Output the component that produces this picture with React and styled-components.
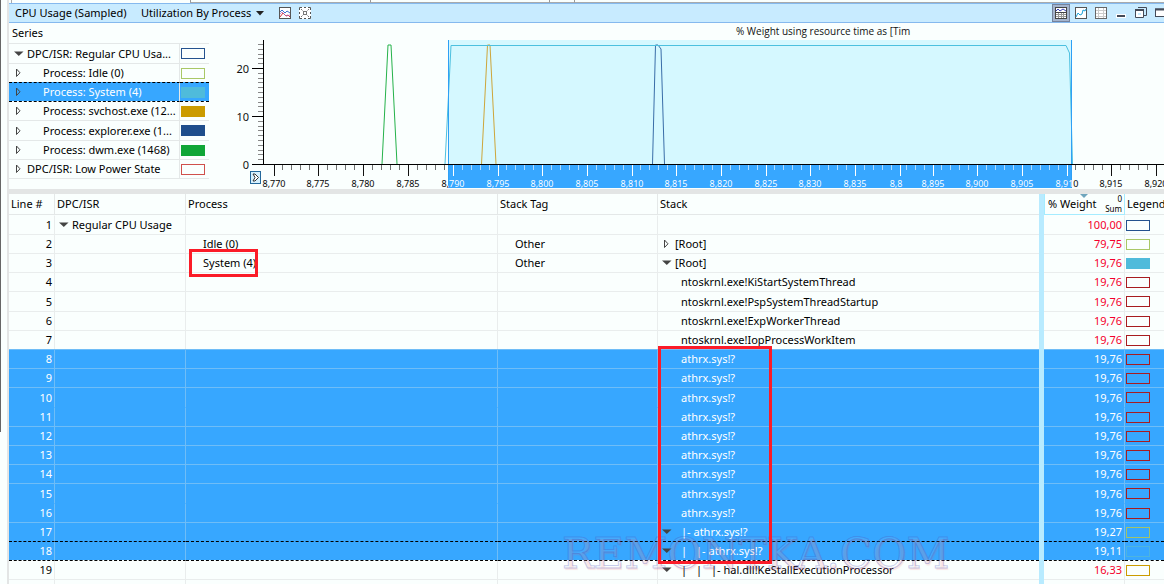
import React, { useState } from "react";
import styled, { createGlobalStyle } from "styled-components";

const seriesRows = [
  { label: "DPC/ISR: Regular CPU Usa...", open: true, line: "#24528f" },
  { label: "Process: Idle (0)", child: true, line: "#a9c866" },
  { label: "Process: System (4)", child: true, line: "#4fbbdb", fill: "#4fbbdb", focused: true },
  { label: "Process: svchost.exe (12...", child: true, line: "#cb9b00", fill: "#cb9b00" },
  { label: "Process: explorer.exe (1...", child: true, line: "#1f4e8c", fill: "#1f4e8c" },
  { label: "Process: dwm.exe (1468)", child: true, line: "#10a637", fill: "#10a637" },
  { label: "DPC/ISR: Low Power State", line: "#d0504c" },
];

const athrx = { stack: "athrx.sys!?", weight: "19,76", line: "#a81c20", selected: true };

const tableRows = [
  { isr: "Regular CPU Usage", weight: "100,00", line: "#24528f" },
  { process: "Idle (0)", tag: "Other", root: "closed", weight: "79,75", line: "#a9c866" },
  { process: "System (4)", tag: "Other", root: "open", weight: "19,76", line: "#4fbbdb", fill: "#4fbbdb" },
  { stack: "ntoskrnl.exe!KiStartSystemThread", weight: "19,76", line: "#a81c20" },
  { stack: "ntoskrnl.exe!PspSystemThreadStartup", weight: "19,76", line: "#a81c20" },
  { stack: "ntoskrnl.exe!ExpWorkerThread", weight: "19,76", line: "#a81c20" },
  { stack: "ntoskrnl.exe!IopProcessWorkItem", weight: "19,76", line: "#a81c20" },
  athrx,
  athrx,
  athrx,
  athrx,
  athrx,
  athrx,
  athrx,
  athrx,
  athrx,
  { stack: "|- athrx.sys!?", open: true, weight: "19,27", line: "#a3c46a", selected: true },
  { stack: "|- athrx.sys!?", open: true, depth: 1, weight: "19,11", line: "#4db4e0", selected: true, focused: true },
  { stack: "|- hal.dll!KeStallExecutionProcessor", open: true, depth: 2, weight: "16,33", line: "#cb9b00", afterFocus: true },
];

const App = () => {
  return (
    <Page>
      <GlobalStyle />
      <Gutter />
      <Window>
        <TabStrip>
          <ActiveTab />
          <TabEdge $width={180} />
          <TabEdge $width={179} />
          <TabEdge $width={25} />
          <TabEdge />
        </TabStrip>
        <Toolbar />
        <TopPane>
          <SeriesList />
          <Chart />
        </TopPane>
        <Splitter />
        <DataTable />
      </Window>
    </Page>
  );
};

export default App;

const Toolbar = () => (
  <Bar>
    <Title>CPU Usage (Sampled)</Title>
    <Preset>
      <PresetSelect aria-label="Preset" defaultValue="process">
        <option value="process">Utilization By Process</option>
      </PresetSelect>
      <svg width="8" height="5">
        <path d="M0 0h8L4 4.5z" fill="#222" />
      </svg>
    </Preset>
    <IconButton aria-label="Chart colors">
      <svg width="12" height="12" fill="none">
        <rect x=".5" y=".5" width="11" height="11" fill="#fff" stroke="#555" />
        <path d="M1 5l2-2 3 3 2-2 3 2" stroke="#3f6fd0" />
        <path d="M1 10l3-4 3 3 2-1 2 2" stroke="#d8323c" />
        <path d="M1 7l2-2 4 4 4-1" stroke="#b060b0" strokeWidth=".7" />
      </svg>
    </IconButton>
    <IconButton aria-label="Fit selection">
      <svg width="12" height="12" fill="none">
        <rect width="12" height="12" fill="#fff" />
        <path
          d="M.5 3V.5H3M5 .5h2M9 .5h2.500V3M11.500 5v2M11.500 9v2.500H9M7 11.500H5M3 11.500H.5V9M.5 7V5"
          stroke="#555"
        />
        <path d="M2 2l1.500 1.500M10 2L8.500 3.500M2 10l1.500-1.500M10 10L8.500 8.500" stroke="#777" />
        <rect x="4.500" y="4.500" width="3" height="3" stroke="#777" />
      </svg>
    </IconButton>
    <WindowButtons>
      <IconButton aria-label="Graph and table" $pressed>
        <svg width="12" height="12" fill="none">
          <rect x=".5" y=".5" width="11" height="11" fill="#fff" stroke="#444" />
          <path d="M1 4l2-2 2 2 3-2 3 2" stroke="#3a43b8" />
          <path d="M1 5.500h10" stroke="#444" />
          <path d="M1 7.500h10M1 9.500h10M3.500 6v5M6.500 6v5M8.500 6v5" stroke="#999" />
        </svg>
      </IconButton>
      <IconButton aria-label="Graph only">
        <svg width="12" height="12" fill="none">
          <rect x=".5" y=".5" width="11" height="11" fill="#fff" stroke="#555" />
          <path d="M1 10l2-4 2 2 2-1 1-4 2 1 1-2" stroke="#1ba1d8" />
        </svg>
      </IconButton>
      <IconButton aria-label="Table only">
        <svg width="12" height="12" fill="none">
          <rect x=".5" y=".5" width="11" height="11" fill="#fff" stroke="#666" />
          <path d="M1 3.500h10M1 6.500h10M1 9.500h10M3.500 1v10M8.500 1v10" stroke="#ccc" />
        </svg>
      </IconButton>
      <IconButton aria-label="Minimize">
        <svg width="12" height="12">
          <path d="M1 7h10v4H1z" fill="#fff" />
          <path d="M2 8h8v2H2z" fill="#444b58" />
        </svg>
      </IconButton>
      <IconButton aria-label="Restore">
        <svg width="12" height="12" fill="none">
          <path d="M3 .5h8.500V8.500H9" stroke="#444b58" />
          <path d="M.5 2.500h8v8h-8z" fill="#fff" stroke="#444b58" />
          <path d="M0 3h9" stroke="#444b58" strokeWidth="2" />
          <path d="M3 6h3v2H3z" fill="#c8ebff" />
        </svg>
      </IconButton>
      <IconButton aria-label="Maximize">
        <svg width="12" height="12" fill="none">
          <rect x=".5" y="2" width="11" height="7.500" fill="#fff" stroke="#444b58" />
          <path d="M0 2.500h12" stroke="#444b58" strokeWidth="2" />
        </svg>
      </IconButton>
    </WindowButtons>
  </Bar>
);

const Twisty = ({ open: initial }) => {
  const [open, setOpen] = useState(!!initial);

  return (
    <TwistyButton aria-label="Expand" aria-expanded={open} onClick={() => setOpen(!open)}>
      <svg width="10" height="10">
        {open ? (
          <path d="M0 2.500h9.500L4.800 7z" fill="#444" />
        ) : (
          <path d="M2.500 1v7.500L6 4.800z" fill="none" stroke="#444" />
        )}
      </svg>
    </TwistyButton>
  );
};

const SeriesList = () => (
  <SeriesTable>
    <colgroup>
      <col />
      <col width="29" />
    </colgroup>
    <thead>
      <tr>
        <th>Series</th>
        <th aria-label="Legend" />
      </tr>
    </thead>
    <tbody>
      {seriesRows.map((row, i) => (
        <SeriesRow key={row.label} $focused={row.focused} $afterFocus={i > 0 && seriesRows[i - 1].focused}>
          <td>
            <Cell>
              <Twisty open={row.open} />
              <Label $indent={row.child ? 16 : 0}>{row.label}</Label>
            </Cell>
          </td>
          <td>
            <Swatch $line={row.line} $fill={row.fill} />
          </td>
        </SeriesRow>
      ))}
    </tbody>
  </SeriesTable>
);

const axisTop = 17;
const axisBottom = 141;
const axisLeft = 54;
const selectionStart = 239;
const selectionEnd = 863;

const majorTicks = [
  [65, "8,770"],
  [109, "8,775"],
  [154, "8,780"],
  [199, "8,785"],
  [244, "8,790"],
  [289, "8,795"],
  [333, "8,800"],
  [378, "8,805"],
  [423, "8,810"],
  [467, "8,815"],
  [512, "8,820"],
  [557, "8,825"],
  [601, "8,830"],
  [646, "8,835"],
  [691, "8,8"],
  [724, "8,895"],
  [768, "8,900"],
  [813, "8,905"],
  [858, "8,910"],
  [902, "8,915"],
  [947, "8,920"],
];

const minorTicks = majorTicks.flatMap(([x], i) => {
  const next = majorTicks[i + 1];
  if (!next) return [];
  const gap = next[0] - x;
  return [9, 18, 27, 36].filter((step) => step < gap - 4).map((step) => next[0] - step);
});

const Chart = () => (
  <ChartArea>
    <svg width="100%" height="166" fill="none">
      <defs>
        <linearGradient id="ink" gradientUnits="userSpaceOnUse" x1={selectionStart} x2={selectionEnd} y1="0" y2="0">
          <stop offset="0" stopColor="#111" />
          <stop offset="0" stopColor="#fff" />
          <stop offset="1" stopColor="#fff" />
          <stop offset="1" stopColor="#111" />
        </linearGradient>
      </defs>

      <rect x={selectionStart} y={axisTop} width={selectionEnd - selectionStart} height="124" fill="#d5f8ff" />
      <rect x={selectionStart} y={axisBottom} width={selectionEnd - selectionStart} height="24" fill="#37a7ff" />

      <path d="M173 141L179 22H182L188 141" stroke="#25b24a" />
      <path d="M272.500 141L278.500 22H281L287 141" stroke="#cda63a" />
      <path d="M443.500 141L446.500 22H449L452 26L455.500 141" stroke="#3a6da8" />
      <path d="M236 141L242 22.500H857L860.500 30L863.500 141" stroke="#4cc0df" />
      <path d={`M${selectionStart + 0.5} ${axisTop}V165M${selectionEnd - 0.5} ${axisTop}V165`} stroke="#2ea0f5" />

      <path d={`M${axisLeft + 0.5} ${axisTop}V${axisBottom}M43 ${axisBottom + 0.5}H2000`} stroke="#000" />
      {Array.from({ length: 26 }, (_, i) => {
        const y = Math.round(axisBottom - i * 4.8) + 0.5;
        return <path key={i} d={`M${i % 10 === 0 ? 43 : 49} ${y}H54`} stroke={i % 10 === 0 ? "#000" : "#888"} />;
      })}
      {[0, 10, 20].map((value) => (
        <AxisText key={value} x="40" y={axisBottom - value * 4.8 + 5} textAnchor="end" $size={11}>
          {value}
        </AxisText>
      ))}

      {minorTicks.map((x) => (
        <rect key={x} x={x} y="142" width="1" height="5" fill="url(#ink)" opacity=".6" />
      ))}
      {majorTicks.map(([x, label]) => (
        <g key={label} fill="url(#ink)">
          <rect x={x} y="142" width="1" height="11" />
          <AxisText x={label === "8,8" ? x - 4 : x} y="164" textAnchor="middle" $size={9}>
            {label}
          </AxisText>
        </g>
      ))}

      <ChartTitle x="527" y="12">
        % Weight using resource time as [Tim
      </ChartTitle>

      <rect x="41.500" y="148.500" width="10" height="12" fill="#d6f1ff" stroke="#24689b" />
      <path d="M44 151h2l3.500 3.500L46 158h-2l2-3.500z" fill="#fff" stroke="#333" />
    </svg>
  </ChartArea>
);

const DataTable = () => (
  <TableArea>
    <table>
      <colgroup>
        <col width="46" />
        <col width="131" />
        <col width="312" />
        <col width="160" />
        <col />
        <col width="5" />
        <col width="81" />
        <col width="39" />
      </colgroup>
      <thead>
        <tr>
          <HeadCell>Line #</HeadCell>
          <HeadCell>DPC/ISR</HeadCell>
          <HeadCell>Process</HeadCell>
          <HeadCell>Stack Tag</HeadCell>
          <HeadCell $last>Stack</HeadCell>
          <Divider as="th" aria-label="Divider" />
          <HeadCell $sorted>
            <SortArrow width="8" height="4">
              <path d="M0 0h8L4 4z" fill="#6fa5bd" />
            </SortArrow>
            <SortedHead>
              % Weight
              <Aggregate>
                <span>0</span>
                <span>Sum</span>
              </Aggregate>
            </SortedHead>
          </HeadCell>
          <HeadCell $last>Legend</HeadCell>
        </tr>
      </thead>
      <tbody>
        {tableRows.map((row, i) => (
          <Row key={i} $selected={row.selected} $dashed={row.focused || row.afterFocus}>
            <NumberCell>{i + 1}</NumberCell>
            <BodyCell>
              {row.isr && (
                <Cell>
                  <Twisty open />
                  <Label>{row.isr}</Label>
                </Cell>
              )}
            </BodyCell>
            <BodyCell>
              <Leaf>{row.process}</Leaf>
            </BodyCell>
            <BodyCell>
              <Leaf>{row.tag}</Leaf>
            </BodyCell>
            <BodyCell $last>
              <Cell>
                {row.root || row.open ? <Twisty open={row.root !== "closed"} /> : <Blank />}
                {row.root ? (
                  <Label>[Root]</Label>
                ) : (
                  <Label $indent={6}>
                    {Array.from({ length: row.depth || 0 }, (_, n) => (
                      <Guide key={n}>|</Guide>
                    ))}
                    {row.stack}
                  </Label>
                )}
              </Cell>
            </BodyCell>
            <Divider />
            <WeightCell $selected={row.selected}>{row.weight}</WeightCell>
            <BodyCell $last>
              <Swatch $line={row.line} $fill={row.fill} />
            </BodyCell>
          </Row>
        ))}
        <Row>
          <NumberCell />
          <BodyCell />
          <BodyCell />
          <BodyCell />
          <BodyCell $last />
          <Divider />
          <WeightCell />
          <BodyCell $last />
        </Row>
      </tbody>
    </table>
    <Watermark>REMONTKA.COM</Watermark>
    <Marker $left={180} $top={55} $width={69} $height={28} />
    <Marker $left={649} $top={152} $width={114} $height={218} />
  </TableArea>
);

const GlobalStyle = createGlobalStyle`
  * {
    box-sizing: border-box;
  }

  body {
    margin: 0;
    overflow: hidden;
    background: #fafffe;
    color: #000;
    font-family: "Noto Sans", "Open Sans", sans-serif;
    font-size: 11px;
    line-height: 18px;
  }

  table {
    width: 100%;
    border-spacing: 0;
    table-layout: fixed;
  }

  th {
    font-weight: normal;
    text-align: left;
  }

  th, td {
    padding: 0;
    overflow: hidden;
    white-space: nowrap;
  }

  button, select {
    padding: 0;
    border: 0;
    background: none;
    color: inherit;
    font: inherit;
  }
`;

const Page = styled.div`
  display: flex;
  height: 100vh;
  overflow: hidden;
`;

const Gutter = styled.div`
  flex: none;
  width: 9px;
  height: 100%;
  border-right: 2px solid #e3e5e5;
  background: linear-gradient(#666, #666) 0 0 / 1px 74% no-repeat;
`;

const Window = styled.main`
  display: flex;
  flex: 1;
  flex-direction: column;
  min-width: 0;
`;

const TabStrip = styled.div`
  display: flex;
  flex: none;
  height: 3px;
`;

const ActiveTab = styled.div`
  width: 179px;
  margin-left: 2px;
  border-left: 1px solid #aaa;
`;

const TabEdge = styled.div`
  flex: ${(props) => (props.$width ? "none" : "1")};
  width: ${(props) => props.$width}px;
  border-left: 1px solid #999;
  border-bottom: 1px solid #a8aaac;
`;

const Bar = styled.header`
  display: flex;
  flex: none;
  align-items: center;
  height: 20px;
  padding-left: 6px;
  border-top: 1px solid #85b9ee;
  border-bottom: 1px solid #85b9ee;
  background: #c8ebff;
  overflow: hidden;
`;

const Title = styled.span`
  width: 126px;
  white-space: nowrap;
`;

const Preset = styled.div`
  display: flex;
  align-items: center;
  gap: 4px;
  width: 135px;
`;

const PresetSelect = styled.select`
  appearance: none;
  height: 18px;
  outline: none;
`;

const IconButton = styled.button`
  display: flex;
  flex: none;
  align-items: center;
  justify-content: center;
  width: 18px;
  height: 18px;
  margin-right: 2px;
  background: ${(props) => (props.$pressed ? "#a5b5ce" : "none")};
  border: ${(props) => (props.$pressed ? "1px solid #75839c" : "0")};
`;

const WindowButtons = styled.div`
  display: flex;
  width: 112px;
  margin-left: auto;
  overflow: hidden;
`;

const TopPane = styled.section`
  display: flex;
  flex: none;
  align-items: flex-start;
`;

const SeriesTable = styled.table`
  && {
    flex: none;
    width: 200px;
    border-bottom: 1px solid #e4e8e8;
  }

  th {
    height: 20px;
    padding-left: 3px;
  }
`;

const dashed = "1px dashed #000";

const SeriesRow = styled.tr`
  height: 19px;
  background: ${(props) => (props.$focused ? "#37a7ff" : "none")};
  color: ${(props) => (props.$focused ? "#fff" : "inherit")};

  &:nth-child(4n + 1) {
    height: 20px;
  }

  td {
    border-top: ${(props) => (props.$focused || props.$afterFocus ? dashed : "1px solid #e4e8e8")};
  }

  td:first-child {
    padding-left: 1px;
    border-right: 1px solid #e4e8e8;
  }

  td:last-child {
    padding-left: 1px;
  }
`;

const Cell = styled.div`
  display: flex;
  align-items: center;
  height: 18px;
  padding-left: 3px;
`;

const TwistyButton = styled.button`
  display: flex;
  flex: none;
  align-items: center;
  justify-content: center;
  width: 12px;
  height: 12px;
  margin-right: 2px;
`;

const Blank = styled.span`
  flex: none;
  width: 14px;
`;

const Label = styled.span`
  padding-left: ${(props) => props.$indent || 0}px;
`;

const Leaf = styled.span`
  padding-left: 17px;
`;

const Guide = styled.span`
  display: inline-block;
  width: 15px;
`;

const Swatch = styled.div`
  width: 24px;
  height: 11px;
  border: 1px solid ${(props) => props.$line};
  background: ${(props) => props.$fill || "transparent"};
`;

const ChartArea = styled.div`
  flex: 1;
  min-width: 0;
  height: 166px;
  overflow: hidden;
`;

const AxisText = styled.text`
  fill: ${(props) => (props.$size === 9 ? "inherit" : "#111")};
  font-size: ${(props) => props.$size}px;
`;

const ChartTitle = styled.text`
  fill: #111;
  font-family: "Open Sans", "Noto Sans", sans-serif;
  font-size: 10px;
`;

const Splitter = styled.div`
  flex: none;
  height: 5px;
  background: #e3e5e5;
`;

const TableArea = styled.section`
  position: relative;
  flex: 1;
  min-height: 0;
  overflow: hidden;
`;

const HeadCell = styled.th`
  position: ${(props) => (props.$sorted ? "relative" : "static")};
  height: 21px;
  padding-left: ${(props) => (props.$sorted ? 3 : 2)}px;
  border: 0 solid ${(props) => (props.$sorted ? "#a5ecff" : "#e4e8e8")};
  border-width: 0 ${(props) => (props.$last ? 0 : 1)}px 1px ${(props) => (props.$sorted ? 1 : 0)}px;
`;

const SortedHead = styled.div`
  display: flex;
  justify-content: space-between;
  height: 20px;
  padding-right: 2px;
  line-height: 20px;
`;

const SortArrow = styled.svg`
  position: absolute;
  top: 0;
  left: 35px;
`;

const Aggregate = styled.span`
  display: flex;
  flex-direction: column;
  align-items: flex-end;
  font-size: 8px;
  line-height: 10px;
`;

const Row = styled.tr`
  height: 19px;
  background: ${(props) => (props.$selected ? "#37a7ff" : "none")};
  color: ${(props) => (props.$selected ? "#fff" : "inherit")};

  &:nth-child(5n) {
    height: 20px;
  }

  td {
    border: 0 solid ${(props) => (props.$selected ? "#6fbdf7" : "#e9eded")};
    border-top: ${(props) => props.$dashed && dashed};
    border-top-width: 1px;
  }

  &:nth-child(5n + 1) td {
    border-top-color: ${(props) => props.$selected && "transparent"};
  }

  &:first-child td {
    border-top-color: transparent;
  }
`;

const BodyCell = styled.td`
  && {
    border-right-width: ${(props) => (props.$last ? 0 : 1)}px;
  }

  > ${Swatch} {
    margin-left: 1px;
  }
`;

const NumberCell = styled(BodyCell)`
  padding-right: 2px;
  text-align: right;
`;

const WeightCell = styled(NumberCell)`
  color: ${(props) => (props.$selected ? "#fff" : "#f5002c")};
`;

const Divider = styled.td`
  && {
    border: 0;
    background: #b8ebff;
  }
`;

const Marker = styled.div`
  position: absolute;
  left: ${(props) => props.$left}px;
  top: ${(props) => props.$top}px;
  width: ${(props) => props.$width}px;
  height: ${(props) => props.$height}px;
  border: 3px solid #fb1c28;
  pointer-events: none;
`;

const Watermark = styled.div`
  position: absolute;
  left: 553px;
  top: 336px;
  color: rgba(255, 255, 255, 0.08);
  font-family: "DejaVu Serif", serif;
  font-size: 42px;
  line-height: 48px;
  -webkit-text-stroke: 1px rgba(70, 80, 190, 0.3);
  text-shadow: 1px 2px 1px rgba(240, 80, 90, 0.15);
  pointer-events: none;
`;
